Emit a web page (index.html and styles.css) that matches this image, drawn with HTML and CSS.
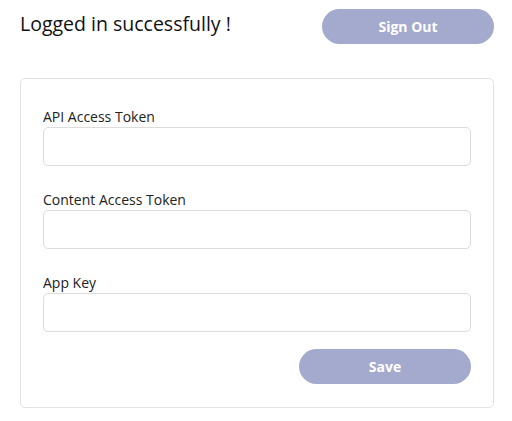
FILE: index.html
```html
<!DOCTYPE html>
<html>
<head>
<meta charset="utf-8">
<link rel="stylesheet" href="styles.css">
</head>
<body>
<div class="page">
  <header class="top">
    <h1 class="title">Logged in successfully !</h1>
    <button class="btn btn-signout">Sign Out</button>
  </header>
  <form class="card">
    <label class="field">
      <span class="label">API Access Token</span>
      <input class="input" type="text">
    </label>
    <label class="field">
      <span class="label">Content Access Token</span>
      <input class="input" type="text">
    </label>
    <label class="field">
      <span class="label">App Key</span>
      <input class="input" type="text">
    </label>
    <div class="actions">
      <button class="btn btn-save" type="button">Save</button>
    </div>
  </form>
</div>
</body>
</html>
```

FILE: styles.css
```css
* { box-sizing: border-box; }
html, body { margin: 0; padding: 0; background: #fff; }
body {
  font-family: "Open Sans", "Noto Sans", sans-serif;
  color: #1b1b1b;
}
.page {
  width: 474px;
  margin-left: 20px;
  padding-top: 9px;
}
.top {
  display: flex;
  justify-content: space-between;
  align-items: flex-start;
  height: 69px;
}
.title {
  margin: 0;
  margin-top: 1px;
  font-size: 19.5px;
  font-weight: 400;
  line-height: 27px;
  color: #111;
}
.btn {
  width: 172px;
  height: 35px;
  border: none;
  border-radius: 18px;
  background: #a3aacd;
  color: #fff;
  font-family: "Open Sans", "Noto Sans", sans-serif;
  font-weight: 700;
  font-size: 14px;
  padding: 0;
}
.card {
  border: 1px solid #e3e3e3;
  border-radius: 5px;
  padding: 27px 22px 23px 22px;
  display: flex;
  flex-direction: column;
}
.field {
  display: flex;
  flex-direction: column;
  margin-bottom: 23px;
}
.field:nth-of-type(3) { margin-bottom: 17px; }
.label {
  font-size: 14px;
  line-height: 21px;
  color: #222;
}
.input {
  height: 39px;
  border: 1px solid #dcdcdc;
  border-radius: 5px;
  font-size: 14px;
  padding: 0 10px;
  outline: none;
}
.actions {
  display: flex;
  justify-content: flex-end;
}
```
